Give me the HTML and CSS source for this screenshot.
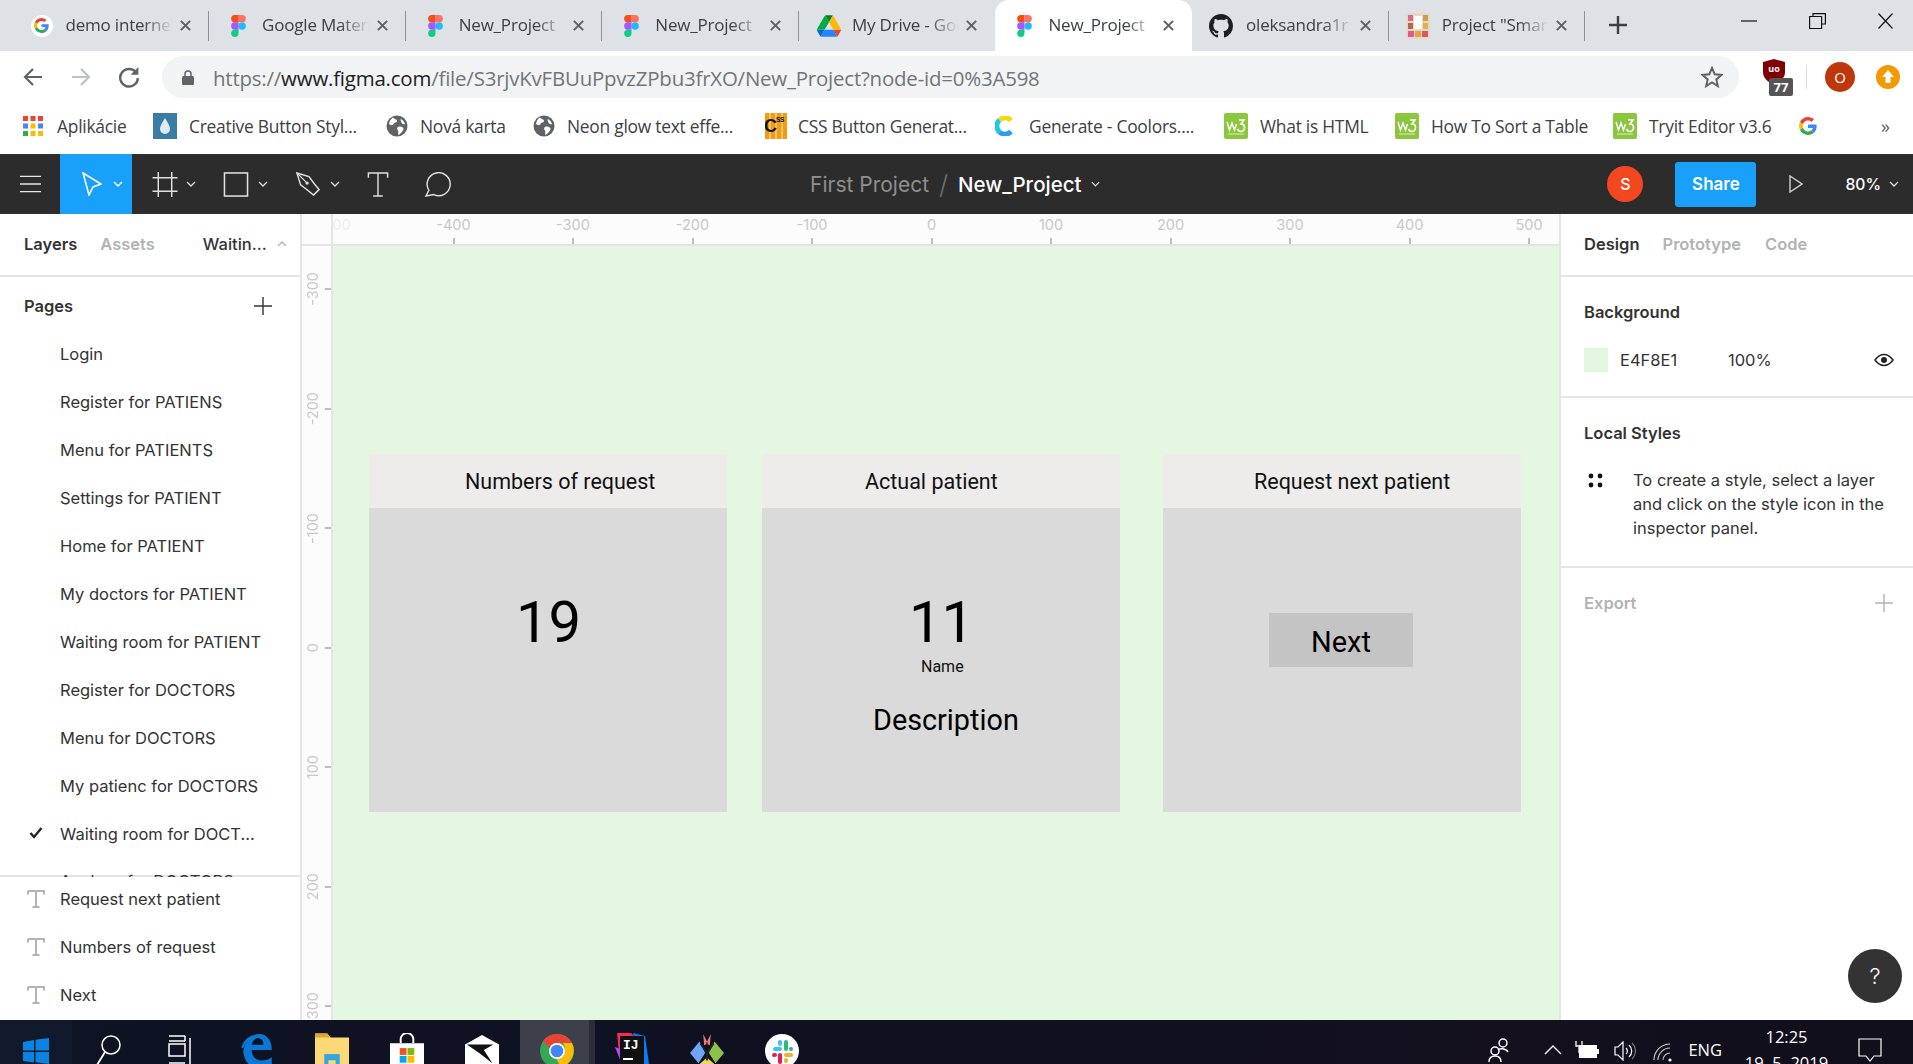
FILE: index.html
```html
<!DOCTYPE html>
<html lang="en">
<head>
<meta charset="utf-8">
<title>New_Project - Figma</title>
<link rel="stylesheet" href="styles.css">
</head>
<body>
<svg class="defs" width="0" height="0">
  <symbol id="figma" viewBox="0 0 38 57">
    <path d="M19 28.5a9.5 9.5 0 1 1 19 0 9.5 9.5 0 0 1-19 0z" fill="#1ABCFE"/>
    <path d="M0 47.5A9.5 9.5 0 0 1 9.5 38H19v9.5a9.5 9.5 0 1 1-19 0z" fill="#0ACF83"/>
    <path d="M19 0v19h9.5a9.5 9.5 0 1 0 0-19H19z" fill="#FF7262"/>
    <path d="M0 9.5A9.5 9.5 0 0 0 9.5 19H19V0H9.5A9.5 9.5 0 0 0 0 9.5z" fill="#F24E1E"/>
    <path d="M0 28.5A9.5 9.5 0 0 0 9.5 38H19V19H9.5A9.5 9.5 0 0 0 0 28.5z" fill="#A259FF"/>
  </symbol>
  <symbol id="google" viewBox="0 0 48 48">
    <path fill="#EA4335" d="M24 9.5c3.54 0 6.71 1.22 9.21 3.6l6.85-6.85C35.9 2.38 30.47 0 24 0 14.62 0 6.51 5.38 2.56 13.22l7.98 6.19C12.43 13.72 17.74 9.5 24 9.5z"/>
    <path fill="#4285F4" d="M46.98 24.55c0-1.57-.15-3.09-.38-4.55H24v9.02h12.94c-.58 2.96-2.26 5.48-4.78 7.18l7.73 6c4.51-4.18 7.09-10.36 7.09-17.65z"/>
    <path fill="#FBBC05" d="M10.53 28.59c-.48-1.45-.76-2.99-.76-4.59s.27-3.14.76-4.59l-7.98-6.19C.92 16.46 0 20.12 0 24c0 3.88.92 7.54 2.56 10.78l7.97-6.19z"/>
    <path fill="#34A853" d="M24 48c6.48 0 11.93-2.13 15.89-5.81l-7.73-6c-2.15 1.45-4.92 2.3-8.16 2.3-6.26 0-11.57-4.22-13.47-9.91l-7.98 6.19C6.51 42.62 14.62 48 24 48z"/>
  </symbol>
  <symbol id="drive" viewBox="0 0 87.3 78">
    <path d="m6.6 66.85 3.85 6.65c.8 1.4 1.95 2.5 3.3 3.3l13.75-23.8h-27.5c0 1.55.4 3.1 1.2 4.5z" fill="#0066da"/>
    <path d="m43.65 25-13.75-23.8c-1.35.8-2.5 1.9-3.3 3.3l-25.4 44a9.06 9.06 0 0 0 -1.2 4.5h27.5z" fill="#00ac47"/>
    <path d="m73.55 76.8c1.35-.8 2.5-1.9 3.3-3.3l1.6-2.75 7.65-13.25c.8-1.4 1.2-2.95 1.2-4.5h-27.502l5.852 11.5z" fill="#ea4335"/>
    <path d="m43.65 25 13.75-23.8c-1.35-.8-2.9-1.2-4.5-1.2h-18.5c-1.6 0-3.15.45-4.5 1.2z" fill="#00832d"/>
    <path d="m59.8 53h-32.3l-13.75 23.8c1.35.8 2.9 1.2 4.5 1.2h50.8c1.6 0 3.15-.45 4.5-1.2z" fill="#2684fc"/>
    <path d="m73.4 26.5-12.7-22c-.8-1.4-1.95-2.5-3.3-3.3l-13.75 23.8 16.15 28h27.45c0-1.55-.4-3.1-1.2-4.5z" fill="#ffba00"/>
  </symbol>
  <symbol id="github" viewBox="0 0 16 16">
    <path fill="#1b1f23" d="M8 0C3.58 0 0 3.58 0 8c0 3.54 2.29 6.53 5.47 7.59.4.07.55-.17.55-.38 0-.19-.01-.82-.01-1.49-2.01.37-2.53-.49-2.69-.94-.09-.23-.48-.94-.82-1.13-.28-.15-.68-.52-.01-.53.63-.01 1.08.58 1.23.82.72 1.21 1.87.87 2.33.66.07-.52.28-.87.51-1.07-1.78-.2-3.64-.89-3.64-3.95 0-.87.31-1.59.82-2.15-.08-.2-.36-1.02.08-2.12 0 0 .67-.21 2.2.82.64-.18 1.32-.27 2-.27.68 0 1.36.09 2 .27 1.53-1.04 2.2-.82 2.2-.82.44 1.1.16 1.92.08 2.12.51.56.82 1.27.82 2.15 0 3.07-1.87 3.75-3.65 3.95.29.25.54.73.54 1.48 0 1.07-.01 1.93-.01 2.2 0 .21.15.46.55.38A8.013 8.013 0 0016 8c0-4.42-3.58-8-8-8z"/>
  </symbol>
  <symbol id="close" viewBox="0 0 14 14">
    <path d="M2 2l10 10M12 2L2 12" stroke="#5f6368" stroke-width="2.2" fill="none"/>
  </symbol>
  <symbol id="globe" viewBox="0 0 22 22">
    <circle cx="11" cy="11" r="10.5" fill="#5f6368"/>
    <path d="M7 2.5c1 1.8 4 1.5 4 3.5s-3 1-3.500 3-3 1-4.500 0C3.500 6 5 3.500 7 2.500zM12 12c2-1 5 0 5.500 1.500S14 19.500 12.500 20c-1-2 .5-3-.5-4.500S10.500 13 12 12zM15 4c2 1 3.500 3 4 5-1.500.5-3 0-3.500-1.500S14 5 15 4z" fill="#fff"/>
  </symbol>
  <symbol id="w3" viewBox="0 0 24 26">
    <rect width="24" height="26" rx="2" fill="#8cc63f"/>
    <path d="M3 9l2.500 8 2.500-7 2.500 7 2-6" stroke="#fff" stroke-width="1.400" fill="none"/>
    <path d="M15 7h5l-3 4c2.500 0 3.500 1.500 3.500 3.500s-1.500 4-3.500 4-3-1-3.500-2.500" stroke="#fff" stroke-width="1.600" fill="none"/>
    <path d="M4 21h16" stroke="#d9edb8" stroke-width="1"/>
  </symbol>
  <symbol id="chev" viewBox="0 0 10 6">
    <path d="M1 1l4 4 4-4" fill="none" stroke="currentColor" stroke-width="1.300"/>
  </symbol>
  <symbol id="texticon" viewBox="0 0 18 18">
    <path d="M1 1h16v3.500M1 4.500V1M9 1v16M5.500 17h7" fill="none" stroke="#b3b3b3" stroke-width="2"/>
  </symbol>
</svg>

<div class="screen">
  <header class="tabstrip">
    <div class="tab"><span class="fav fav-g"><svg class="ico-g"><use href="#google"/></svg></span><span class="tab-title">demo internet</span><svg class="tab-x"><use href="#close"/></svg></div>
    <div class="tab"><svg class="fav fav-f"><use href="#figma"/></svg><span class="tab-title">Google Material</span><svg class="tab-x"><use href="#close"/></svg></div>
    <div class="tab"><svg class="fav fav-f"><use href="#figma"/></svg><span class="tab-title">New_Project</span><svg class="tab-x"><use href="#close"/></svg></div>
    <div class="tab"><svg class="fav fav-f"><use href="#figma"/></svg><span class="tab-title">New_Project</span><svg class="tab-x"><use href="#close"/></svg></div>
    <div class="tab tab-before"><svg class="fav fav-d"><use href="#drive"/></svg><span class="tab-title">My Drive - Google</span><svg class="tab-x"><use href="#close"/></svg></div>
    <div class="tab tab-active"><svg class="fav fav-f"><use href="#figma"/></svg><span class="tab-title">New_Project</span><svg class="tab-x"><use href="#close"/></svg></div>
    <div class="tab"><svg class="fav fav-gh"><use href="#github"/></svg><span class="tab-title">oleksandra1r</span><svg class="tab-x"><use href="#close"/></svg></div>
    <div class="tab"><svg class="fav fav-p" viewBox="0 0 24 26"><rect width="24" height="26" rx="2" fill="#e6d9c8"/><rect x="2" y="2" width="5" height="6" fill="#d86a8c"/><rect x="17" y="2" width="5" height="6" fill="#c9a24a"/><rect x="8" y="3" width="8" height="13" fill="#fff"/><rect x="2" y="10" width="5" height="6" fill="#b06a4a"/><rect x="17" y="10" width="5" height="6" fill="#e3b04b"/><rect x="2" y="18" width="6" height="6" fill="#e05a8a"/><rect x="9" y="18" width="6" height="6" fill="#e9a13b"/><rect x="16" y="18" width="6" height="6" fill="#d65a5a"/></svg><span class="tab-title">Project "Smart</span><svg class="tab-x"><use href="#close"/></svg></div>
    <svg class="newtab" viewBox="0 0 18 18"><path d="M9 0v18M0 9h18" stroke="#3c4043" stroke-width="2.400"/></svg>
    <div class="winctl">
      <svg class="win-min" viewBox="0 0 16 2"><path d="M0 1h16" stroke="#111" stroke-width="1.200"/></svg>
      <svg class="win-res" viewBox="0 0 17 16"><path d="M4 3V.6h12.400V11H13M.6 3.500h12v12H.6z" fill="none" stroke="#111" stroke-width="1.200"/></svg>
      <svg class="win-x" viewBox="0 0 15 16"><path d="M.5.500l14 15M14.500.500l-14 15" stroke="#111" stroke-width="1.200"/></svg>
    </div>
  </header>

  <div class="addressbar">
    <svg class="nav-back" viewBox="0 0 20 20"><path d="M19 10H2M10 2l-8 8 8 8" fill="none" stroke="#5f6368" stroke-width="2.200"/></svg>
    <svg class="nav-fwd" viewBox="0 0 20 20"><path d="M1 10h17M10 2l8 8-8 8" fill="none" stroke="#bdc1c6" stroke-width="2.200"/></svg>
    <svg class="nav-reload" viewBox="0 0 20 20"><path d="M16.500 6A8 8 0 1 0 18 11" fill="none" stroke="#5f6368" stroke-width="2.200"/><path d="M18.500 1v7h-7z" fill="#5f6368"/></svg>
    <div class="omnibox">
      <svg class="lock" viewBox="0 0 12 15"><path d="M3 6V4a3 3 0 0 1 6 0v2" fill="none" stroke="#5f6368" stroke-width="1.500"/><rect y="6" width="12" height="9" rx="1.500" fill="#5f6368"/></svg>
      <span class="url"><span class="url-s">https://</span><span class="url-d">www.figma.com</span><span class="url-s">/file/S3rjvKvFBUuPpvzZPbu3frXO/New_Project?node-id=0%3A598</span></span>
      <svg class="star" viewBox="0 0 22 22"><path d="M11 2l2.700 6.300 6.800.6-5.200 4.500 1.600 6.700L11 16.500 5.100 20.100l1.600-6.700L1.500 8.900l6.800-.6z" fill="none" stroke="#5f6368" stroke-width="2"/></svg>
    </div>
    <div class="ublock">
      <svg class="ub-shield" viewBox="0 0 22 26"><path d="M11 0l11 3v10c0 6-5 10-11 13C5 23 0 19 0 13V3z" fill="#800000"/><text x="11" y="13" class="ub-text">uo</text></svg>
      <span class="ub-badge">77</span>
    </div>
    <span class="ext-sep"></span>
    <span class="avatar-o">O</span>
    <svg class="update" viewBox="0 0 24 24"><circle cx="12" cy="12" r="12" fill="#f29900"/><path d="M12 5l6 7h-3.500v6h-5v-6H6z" fill="#fff"/></svg>
  </div>

  <nav class="bookmarks">
    <div class="bm bm-1"><svg class="bm-apps" viewBox="0 0 20 20"><rect width="5" height="5" fill="#ea4335"/><rect x="7.500" width="5" height="5" fill="#ea4335"/><rect x="15" width="5" height="5" fill="#ea4335"/><rect y="7.500" width="5" height="5" fill="#4285f4"/><rect x="7.500" y="7.500" width="5" height="5" fill="#fbbc05"/><rect x="15" y="7.500" width="5" height="5" fill="#4285f4"/><rect y="15" width="5" height="5" fill="#34a853"/><rect x="7.500" y="15" width="5" height="5" fill="#fbbc05"/><rect x="15" y="15" width="5" height="5" fill="#fbbc05"/></svg><span>Aplikácie</span></div>
    <div class="bm bm-2"><svg class="bm-ic" viewBox="0 0 24 26"><rect width="24" height="26" fill="#3a7ca5"/><path d="M12 5c3 5 5 8 5 11a5 5 0 0 1-10 0c0-3 2-6 5-11z" fill="#dcecf5"/></svg><span>Creative Button Styl...</span></div>
    <div class="bm bm-3"><svg class="bm-ic"><use href="#globe"/></svg><span>Nová karta</span></div>
    <div class="bm bm-4"><svg class="bm-ic"><use href="#globe"/></svg><span>Neon glow text effe...</span></div>
    <div class="bm bm-5"><svg class="bm-ic" viewBox="0 0 22 26"><rect width="22" height="26" fill="#f39c12"/><path d="M5 0v26M11 0v26M17 0v26" stroke="#fff" stroke-width=".8"/><text x="-1" y="19" class="css-c">C</text><text x="11" y="9" class="css-text">SS</text></svg><span>CSS Button Generat...</span></div>
    <div class="bm bm-6"><svg class="bm-ic" viewBox="0 0 20 20"><path d="M16 4.500A8 8 0 0 0 4.500 4" stroke="#f5d90a" stroke-width="5" fill="none"/><path d="M4.500 4a8 8 0 0 0 0 12" stroke="#1ec8e7" stroke-width="5" fill="none"/><path d="M4.500 16A8 8 0 0 0 16 15.500" stroke="#2a9df4" stroke-width="5" fill="none"/></svg><span>Generate - Coolors....</span></div>
    <div class="bm bm-7"><svg class="bm-ic"><use href="#w3"/></svg><span>What is HTML</span></div>
    <div class="bm bm-8"><svg class="bm-ic"><use href="#w3"/></svg><span>How To Sort a Table</span></div>
    <div class="bm bm-9"><svg class="bm-ic"><use href="#w3"/></svg><span>Tryit Editor v3.6</span></div>
    <svg class="bm-g"><use href="#google"/></svg>
    <span class="bm-more">»</span>
  </nav>

  <div class="figbar">
    <div class="tools">
      <div class="tool-menu"><svg class="ic-menu" viewBox="0 0 22 18"><path d="M0 1h22M0 9h22M0 17h22" stroke="#e8e8e8" stroke-width="1.500"/></svg></div>
      <div class="tool tool-active"><svg class="ic-move" viewBox="0 0 20 24"><path d="M1 1l18 11-8 3-4 8z" fill="none" stroke="#fff" stroke-width="1.600"/></svg><svg class="chev-s"><use href="#chev"/></svg></div>
      <div class="tool"><svg class="ic-tool" viewBox="0 0 26 26"><path d="M6 0v26M20 0v26M0 6h26M0 20h26" stroke="#e0e0e0" stroke-width="1.500"/></svg><svg class="chev-s"><use href="#chev"/></svg></div>
      <div class="tool tool-rect"><svg class="ic-tool" viewBox="0 0 26 26"><rect x="1" y="1" width="24" height="24" fill="none" stroke="#e0e0e0" stroke-width="1.600"/></svg><svg class="chev-s"><use href="#chev"/></svg></div>
      <div class="tool"><svg class="ic-pen" viewBox="0 0 26 26"><path d="M1 1l13 4 6 8 5 6-6 6-6-5-8-6z" fill="none" stroke="#e0e0e0" stroke-width="1.600"/><path d="M1 1l11 11" stroke="#e0e0e0" stroke-width="1.300"/><circle cx="12" cy="12" r="1.800" fill="#e0e0e0"/></svg><svg class="chev-s"><use href="#chev"/></svg></div>
      <div class="tool-plain"><svg class="ic-t" viewBox="0 0 22 26"><path d="M1 6V1h20v5M11 1v24M6 25h10" fill="none" stroke="#e0e0e0" stroke-width="1.500"/></svg></div>
      <div class="tool-plain tool-comment"><svg class="ic-c" viewBox="0 0 28 26"><path d="M2 25l3-6a12 12 0 1 1 5 4.500z" fill="none" stroke="#e0e0e0" stroke-width="1.500"/></svg></div>
    </div>
    <div class="crumbs"><span class="crumb-team">First Project</span><span class="crumb-slash">/</span><span class="crumb-file">New_Project</span><svg class="chev-c"><use href="#chev"/></svg></div>
    <div class="fig-right">
      <span class="avatar-s">S</span>
      <span class="share">Share</span>
      <svg class="play" viewBox="0 0 14 18"><path d="M1 1l12 8-12 8z" fill="none" stroke="#cfcfcf" stroke-width="1.400"/></svg>
      <span class="zoomv">80%</span>
      <svg class="chev-z"><use href="#chev"/></svg>
    </div>
  </div>

  <main class="work">
    <aside class="left">
      <div class="left-tabs"><span class="tab-on">Layers</span><span class="tab-off tab-assets">Assets</span><span class="page-pick">Waitin...</span><svg class="caret" viewBox="0 0 10 6"><path d="M1 5l4-4 4 4" fill="none" stroke="#b3b3b3" stroke-width="1.300"/></svg></div>
      <div class="pages-head"><span>Pages</span><svg class="plus" viewBox="0 0 18 18"><path d="M9 0v18M0 9h18" stroke="#333" stroke-width="1.400"/></svg></div>
      <ul class="pages">
        <li>Login</li>
        <li>Register for PATIENS</li>
        <li>Menu for PATIENTS</li>
        <li>Settings for PATIENT</li>
        <li>Home for PATIENT</li>
        <li>My doctors for PATIENT</li>
        <li>Waiting room for PATIENT</li>
        <li>Register for DOCTORS</li>
        <li>Menu for DOCTORS</li>
        <li>My patienc for DOCTORS</li>
        <li class="page-on"><svg class="check" viewBox="0 0 14 12"><path d="M1.500 6l3.500 4 7.500-9" fill="none" stroke="#222" stroke-width="2.400"/></svg>Waiting room for DOCT...</li>
        <li class="page-clip">Analyze for DOCTORS</li>
      </ul>
      <ul class="layers">
        <li><svg class="t-ic"><use href="#texticon"/></svg>Request next patient</li>
        <li><svg class="t-ic"><use href="#texticon"/></svg>Numbers of request</li>
        <li><svg class="t-ic"><use href="#texticon"/></svg>Next</li>
      </ul>
    </aside>

    <section class="center">
      <div class="rule-top">
        <div class="corner"></div>
        <div class="hticks">
          <div class="ht ht-first"><span>-500</span></div>
          <div class="ht"><span>-400</span><i></i></div>
          <div class="ht"><span>-300</span><i></i></div>
          <div class="ht"><span>-200</span><i></i></div>
          <div class="ht"><span>-100</span><i></i></div>
          <div class="ht"><span>0</span><i></i></div>
          <div class="ht"><span>100</span><i></i></div>
          <div class="ht"><span>200</span><i></i></div>
          <div class="ht"><span>300</span><i></i></div>
          <div class="ht"><span>400</span><i></i></div>
          <div class="ht"><span>500</span><i></i></div>
        </div>
      </div>
      <div class="stage">
        <div class="vticks">
          <div class="vt vt-first"><span>-300</span><i></i></div>
          <div class="vt"><span>-200</span><i></i></div>
          <div class="vt"><span>-100</span><i></i></div>
          <div class="vt"><span>0</span><i></i></div>
          <div class="vt"><span>100</span><i></i></div>
          <div class="vt"><span>200</span><i></i></div>
          <div class="vt"><span>300</span><i></i></div>
        </div>
        <div class="canvas">
          <article class="card card-a">
            <div class="card-head"><span class="ttl ttl-a">Numbers of request</span></div>
            <div class="big big-a">19</div>
          </article>
          <article class="card card-b">
            <div class="card-head"><span class="ttl ttl-b">Actual patient</span></div>
            <div class="big big-b">11</div>
            <div class="name">Name</div>
            <div class="desc">Description</div>
          </article>
          <article class="card card-c">
            <div class="card-head"><span class="ttl ttl-c">Request next patient</span></div>
            <div class="next">Next</div>
          </article>
        </div>
      </div>
    </section>

    <aside class="right">
      <div class="right-tabs"><span class="tab-on">Design</span><span class="tab-off tab-proto">Prototype</span><span class="tab-off tab-code">Code</span></div>
      <section class="sec sec-bg">
        <h3 class="sec-h">Background</h3>
        <div class="bg-row"><span class="swatch"></span><span class="hex">E4F8E1</span><span class="pct">100%</span><svg class="eye" viewBox="0 0 20 14"><path d="M1 7c2.500-3.500 5.500-5.500 9-5.500S16.500 3.500 19 7c-2.500 3.500-5.500 5.500-9 5.500S3.500 10.500 1 7z" fill="none" stroke="#222" stroke-width="1.500"/><circle cx="10" cy="7" r="3" fill="#222"/></svg></div>
      </section>
      <section class="sec sec-ls">
        <h3 class="sec-h">Local Styles</h3>
        <div class="ls-row"><svg class="dots" viewBox="0 0 15 15"><circle cx="3" cy="3" r="2.400" fill="#111"/><circle cx="12" cy="3" r="2.400" fill="#111"/><circle cx="3" cy="12" r="2.400" fill="#111"/><circle cx="12" cy="12" r="2.400" fill="#111"/></svg><p>To create a style, select a layer and click on the style icon in the inspector panel.</p></div>
      </section>
      <section class="sec-ex"><h3 class="sec-h sec-dim">Export</h3><svg class="plus-dim" viewBox="0 0 18 18"><path d="M9 0v18M0 9h18" stroke="#b3b3b3" stroke-width="1.400"/></svg></section>
      <div class="help">?</div>
    </aside>
  </main>

  <footer class="taskbar">
    <div class="tb-start"><svg class="ti-win" viewBox="0 0 26 26"><path d="M0 4l11-2v10.500H0zM12.500 1.800L26 0v12.500H12.500zM0 14h11v10.500L0 23zM12.500 14H26v12l-13.500-1.800z" fill="#0a84e0"/></svg></div>
    <div class="tb-cell"><svg class="ti-search" viewBox="0 0 25 32"><circle cx="15" cy="10" r="9" fill="none" stroke="#fff" stroke-width="1.500"/><path d="M9 17L1 30" stroke="#fff" stroke-width="1.800"/></svg></div>
    <div class="tb-cell"><svg class="ti-view" viewBox="0 0 24 32"><path d="M1 1h16M1 28h16M1 6h16M17 1v5" fill="none" stroke="#fff" stroke-width="1.500"/><rect x="1" y="9" width="16" height="12" fill="none" stroke="#fff" stroke-width="1.500"/><path d="M22 3v26" stroke="#fff" stroke-width="1.500"/></svg></div>
    <div class="tb-gap"></div>
    <div class="tb-app"><svg class="ti-app" viewBox="0 0 30 34"><path d="M2 18C3 7 10 1 17 1c8 0 12 7 12 15H10c0 6 4 10 9 10 4 0 7-1 10-3v8c-4 2-7 3-11 3C9 34 3 27 2 18z" fill="#0a78d7"/><path d="M1 14C4 6 9 3 14 3" stroke="#0a78d7" stroke-width="2" fill="none"/><path d="M10 11h11c0-4-2-6-5-6s-5 2-6 6z" fill="#101222"/></svg></div>
    <div class="tb-app"><svg class="ti-app" viewBox="0 0 33 34"><path d="M0 0h12l3 4h18v30H0z" fill="#fbd977"/><path d="M0 0h12l3 4H0z" fill="#e2a82d"/><rect x="9" y="20" width="15" height="14" fill="#33a6e0"/><rect x="13" y="26" width="7" height="8" fill="#fbd977"/></svg></div>
    <div class="tb-app"><svg class="ti-app" viewBox="0 0 35 36"><path d="M11 10V6a6.500 6.500 0 0 1 13 0v4" fill="none" stroke="#fff" stroke-width="2"/><rect y="10" width="35" height="26" fill="#fff"/><rect x="10" y="15" width="7" height="7" fill="#f25022"/><rect x="18" y="15" width="7" height="7" fill="#7fba00"/><rect x="10" y="23" width="7" height="7" fill="#00a4ef"/><rect x="18" y="23" width="7" height="7" fill="#ffb900"/></svg></div>
    <div class="tb-app"><svg class="ti-app" viewBox="0 0 36 34"><path d="M0 10L18 0l18 10v24H0z" fill="#fff"/><path d="M2 10h28L20 16l9 14-14-11z" fill="#111"/></svg></div>
    <div class="tb-app tb-chrome"><svg class="ti-app" viewBox="0 0 34 34"><circle cx="17" cy="17" r="17" fill="#34a853"/><path d="M17 0a17 17 0 0 1 15 9H17a8 8 0 0 0-7.500 5L3 7A17 17 0 0 1 17 0z" fill="#ea4335"/><path d="M32 9a17 17 0 0 1-11 24l-7-12a8 8 0 0 0 10-4 8 8 0 0 0-1-8z" fill="#fbbc05"/><circle cx="17" cy="17" r="8" fill="#fff"/><circle cx="17" cy="17" r="6.300" fill="#4285f4"/></svg></div>
    <div class="tb-app"><svg class="ti-app" viewBox="0 0 34 36"><path d="M2 0l14 0 6 6-18 14z" fill="#fe2857"/><path d="M18 0l12 3 4 28-10 5z" fill="#087cfa"/><path d="M0 14l8 20 14 2-6-16z" fill="#b74af7"/><rect x="5" y="3" width="24" height="30" fill="#111"/><text x="8" y="16" class="ij-text">IJ</text><rect x="8" y="25" width="10" height="2" fill="#fff"/></svg></div>
    <div class="tb-app"><svg class="ti-app" viewBox="0 0 36 36"><path d="M10 8L0 20l9 11 7-11z" fill="#6ea6f7"/><path d="M26 8l10 12-9 11-7-11z" fill="#8bc34a"/><path d="M18 25l8 7-8 6-8-6z" fill="#f4d35e"/><path d="M14 0l5 10-4 2zM22 0l-5 10 4 2z" fill="#f27a7a"/><path d="M11 10l7 10 7-10M18 20v8" stroke="#222" stroke-width="2" fill="none"/></svg></div>
    <div class="tb-app"><svg class="ti-app" viewBox="0 0 34 34"><circle cx="17" cy="17" r="17" fill="#fff"/><rect x="8" y="13" width="9" height="4" rx="2" fill="#36c5f0"/><rect x="13" y="6" width="4" height="6" rx="2" fill="#36c5f0"/><rect x="19" y="6" width="4" height="11" rx="2" fill="#2eb67d"/><rect x="24" y="13" width="4" height="4" rx="2" fill="#2eb67d"/><rect x="19" y="19" width="9" height="4" rx="2" fill="#ecb22e"/><rect x="19" y="24" width="4" height="5" rx="2" fill="#ecb22e"/><rect x="13" y="19" width="4" height="11" rx="2" fill="#e01e5a"/><rect x="7" y="19" width="5" height="4" rx="2" fill="#e01e5a"/></svg></div>
    <div class="tray">
      <svg class="tr-people" viewBox="0 0 22 24"><circle cx="15" cy="5" r="4" fill="none" stroke="#fff" stroke-width="1.500"/><path d="M10 12c1-2 8-2 10 2" fill="none" stroke="#fff" stroke-width="1.500"/><circle cx="7" cy="13" r="4" fill="none" stroke="#fff" stroke-width="1.500"/><path d="M1 24c0-4 2-6 6-6s6 2 6 6" fill="none" stroke="#fff" stroke-width="1.500"/></svg>
      <svg class="tr-caret" viewBox="0 0 18 10"><path d="M1 9l8-8 8 8" fill="none" stroke="#fff" stroke-width="1.300"/></svg>
      <svg class="tr-batt" viewBox="0 0 24 18"><rect x="4" y="4" width="18" height="13" fill="#fff"/><rect x="22" y="8" width="2" height="5" fill="#fff"/><path d="M1 0v5h6V0M4 6v6" fill="none" stroke="#fff" stroke-width="1.300"/></svg>
      <svg class="tr-vol" viewBox="0 0 22 20"><path d="M1 6h3l5-5v18l-5-5H1z" fill="none" stroke="#fff" stroke-width="1.200"/><path d="M12 7a4 4 0 0 1 0 6M15 4a8 8 0 0 1 0 12" fill="none" stroke="#fff" stroke-width="1.200"/><path d="M18 2a11 11 0 0 1 0 16" fill="none" stroke="#777" stroke-width="1.200"/></svg>
      <svg class="tr-wifi" viewBox="0 0 20 20"><circle cx="17" cy="18" r="1.600" fill="#fff"/><path d="M10 18a7 7 0 0 1 7-7M5 18a12 12 0 0 1 12-12M1 18A16 16 0 0 1 17 2" fill="none" stroke="#ccc" stroke-width="1.100"/></svg>
      <span class="tr-lang">ENG</span>
      <div class="clock"><span>12:25</span><span>19. 5. 2019</span></div>
      <svg class="tr-note" viewBox="0 0 24 24"><path d="M1 1h22v17h-7l-4 5-4-5H1z" fill="none" stroke="#fff" stroke-width="1.200"/></svg>
    </div>
  </footer>
</div>
</body>
</html>
```
FILE: styles.css
```css
* { box-sizing: border-box; }
html, body { margin: 0; padding: 0; height: 100%; overflow: hidden; background: #fff; }
body { font-family: "Open Sans", "Noto Sans", sans-serif; color: #333; }
.defs { display: block; height: 0; }
.screen { width: 1913px; height: 1064px; display: flex; flex-direction: column; overflow: hidden; }
svg { display: block; flex: none; }

/* tab strip */
.tabstrip { height: 51px; flex: none; background: #dee1e6; display: flex; align-items: stretch; padding-left: 12.5px; }
.tab { width: 196.6px; flex: none; display: flex; align-items: center; padding: 0 17px 0 18px; position: relative; }
.tab::after { content: ""; position: absolute; right: 0; top: 11px; height: 30px; width: 1px; background: #8f9296; }
.tab-before::after, .tab-active::after { display: none; }
.tab-active { background: #fff; border-radius: 14px 14px 0 0; }
.fav { width: 22px; height: 22px; }
.fav-g { background: #fff; border-radius: 50%; display: flex; align-items: center; justify-content: center; }
.ico-g { width: 15px; height: 15px; }
.fav-f { width: 15px; height: 22px; margin: 0 3px 0 4px; }
.fav-d { width: 24px; height: 22px; margin-right: -2px; }
.fav-gh { width: 24px; height: 24px; margin-left: -1px; }
.fav-p { width: 24px; height: 26px; margin-left: -1px; margin-right: -1px; }
.tab-title { flex: 1; min-width: 0; margin: -2px 0 0 13px; font-size: 17px; letter-spacing: -.2px; white-space: nowrap; overflow: hidden; color: #3c4043;
  -webkit-mask-image: linear-gradient(90deg, #000 72%, transparent 100%); mask-image: linear-gradient(90deg, #000 72%, transparent 100%); }
.tab-x { width: 13px; height: 13px; margin-left: 6px; }
.newtab { width: 18px; height: 18px; margin: 16px 0 0 24px; }
.winctl { margin-left: auto; display: flex; align-items: flex-start; }
.win-min { width: 16px; height: 2px; margin-top: 20px; margin-right: 52px; }
.win-res { width: 17px; height: 16px; margin-top: 13px; margin-right: 52px; }
.win-x { width: 15px; height: 16px; margin-top: 13px; margin-right: 20px; }

/* address bar */
.addressbar { height: 52px; flex: none; display: flex; align-items: center; background: #fff; padding-left: 23px; }
.nav-back { width: 20px; height: 20px; }
.nav-fwd { width: 22px; height: 20px; margin-left: 27px; }
.nav-reload { width: 22px; height: 22px; margin-left: 26px; }
.omnibox { margin-left: 22px; width: 1577px; height: 42px; border-radius: 21px; background: #f1f3f4; display: flex; align-items: center; padding-left: 20px; position: relative; }
.lock { width: 12px; height: 15px; }
.url { margin: 1px 0 0 19px; font-size: 20.45px; letter-spacing: -.2px; white-space: nowrap; }
.url-s { color: #70757a; }
.url-d { color: #202124; }
.star { width: 22px; height: 22px; position: absolute; right: 16px; top: 10px; }
.ublock { width: 32px; height: 36px; margin-left: 23px; position: relative; }
.ub-shield { width: 22px; height: 26px; margin-left: 1px; }
.ub-text { font: 700 9px "Open Sans", sans-serif; fill: #fff; text-anchor: middle; }
.ub-badge { position: absolute; left: 7px; top: 19px; width: 24px; height: 18px; background: #555; color: #fff; font: 700 13px/18px "Open Sans", sans-serif; text-align: center; border-radius: 2px; }
.ext-sep { width: 1px; height: 24px; background: #dadce0; margin-left: 12px; }
.avatar-o { width: 30px; height: 30px; border-radius: 50%; background: #bf360c; color: #fff; font-size: 15px; text-align: center; line-height: 30px; margin-left: 18px; }
.update { width: 24px; height: 24px; margin-left: 21px; }

/* bookmarks */
.bookmarks { height: 51px; flex: none; display: flex; align-items: center; padding-bottom: 5px; font-size: 17.4px; letter-spacing: -.25px; color: #3c4043; }
.bm { display: flex; align-items: center; flex: none; white-space: nowrap; }
.bm-ic { width: 22px; height: 26px; margin-right: 12px; }
.bm-apps { width: 20px; height: 20px; margin-right: 14px; }
.bm-1 { margin-left: 23px; width: 130px; }
.bm-2 { width: 233px; }
.bm-2 .bm-ic { width: 24px; margin-right: 12px; }
.bm-3 { width: 147px; }
.bm-4 { width: 232px; }
.bm-5 { width: 230px; }
.bm-5 .bm-ic { margin-right: 11px; }
.bm-6 { width: 229px; }
.bm-7 { width: 171px; }
.bm-8 { width: 218px; }
.bm-9 { width: 186px; }
.bm-3 .bm-ic, .bm-4 .bm-ic { width: 22px; height: 22px; }
.bm-6 .bm-ic { width: 20px; height: 20px; margin-right: 14px; }
.bm-7 .bm-ic, .bm-8 .bm-ic, .bm-9 .bm-ic { width: 24px; height: 26px; }
.css-c { font: 700 18px "Liberation Sans", sans-serif; fill: #111; }
.css-text { font: 700 6.5px "Liberation Sans", sans-serif; fill: #111; }
.bm-g { width: 18px; height: 18px; }
.bm-more { margin-left: 64px; font-size: 18px; color: #5f6368; }

/* figma bar */
.figbar { height: 60px; flex: none; background: #2c2c2c; display: flex; align-items: center; }
.tools { display: flex; align-items: stretch; height: 60px; flex: 0 0 468px; }
.tool-menu { width: 60px; display: flex; align-items: center; padding-left: 20px; }
.ic-menu { width: 21px; height: 18px; }
.tool { width: 72px; display: flex; align-items: center; padding-left: 20px; color: #ddd; }
.tool-active { background: #18a0fb; padding-left: 22px; color: #fff; }
.tool-rect { padding-left: 19px; }
.tool-rect .chev-s { margin-left: 9px; }
.ic-move { width: 20px; height: 24px; margin-right: 11px; }
.ic-tool { width: 26px; height: 25px; }
.ic-pen { width: 24px; height: 24px; margin-right: 2px; }
.ic-t { width: 22px; height: 25px; }
.ic-c { width: 27px; height: 25px; }
.chev-s { width: 10px; height: 6px; margin-left: 8px; }
.tool-active .chev-s { margin-left: 0; }
.tool-plain { width: 60px; display: flex; align-items: center; justify-content: center; }
.tool-comment { padding-right: 2px; }
.crumbs { margin-left: 342px; display: flex; align-items: center; font-family: Inter, sans-serif; font-size: 21px; white-space: nowrap; }
.crumb-team { color: #8f8f8f; }
.crumb-slash { color: #6f6f6f; margin: 0 10px; font-size: 26px; font-weight: 300; }
.crumb-file { color: #fff; font-weight: 500; font-size: 20.5px; }
.chev-c { width: 9px; height: 6px; margin-left: 9px; color: #ddd; }
.fig-right { margin-left: auto; display: flex; align-items: center; padding-right: 14px; font-family: Inter, sans-serif; }
.avatar-s { width: 36px; height: 36px; border-radius: 50%; background: #f24822; color: #fff; font-size: 16px; font-weight: 500; text-align: center; line-height: 36px; }
.share { width: 81px; height: 45px; margin-left: 32px; border-radius: 3px; background: #18a0fb; color: #fff; font-size: 17px; font-weight: 600; text-align: center; line-height: 45px; }
.play { width: 14px; height: 18px; margin-left: 33px; }
.zoomv { margin-left: 42px; color: #fff; font-size: 15.7px; font-weight: 500; }
.chev-z { width: 10px; height: 6px; margin-left: 8px; color: #ddd; }

/* workspace */
.work { height: 806px; flex: none; display: flex; font-family: Inter, sans-serif; }
.left { width: 302px; flex: none; border-right: 2px solid #e5e5e5; display: flex; flex-direction: column; background: #fff; font-size: 16.5px; color: #333; }
.left-tabs { height: 63px; flex: none; border-bottom: 2px solid #e5e5e5; display: flex; align-items: center; padding: 0 0 2px 24px; }
.tab-on { color: #333; font-weight: 600; font-size: 16.5px; }
.tab-off { color: #b3b3b3; font-weight: 600; font-size: 16.5px; }
.tab-assets { margin-left: 23px; }
.page-pick { margin-left: 48px; font-weight: 500; }
.caret { width: 10px; height: 6px; margin-left: 10px; }
.pages-head { height: 53px; flex: none; display: flex; align-items: center; justify-content: space-between; padding: 5px 28px 0 24px; font-weight: 600; }
.plus { width: 18px; height: 18px; }
.pages { list-style: none; margin: 0; padding: 0; height: 547px; flex: none; overflow: hidden; background: linear-gradient(#e5e5e5, #e5e5e5) left bottom / 100% 2px no-repeat; }
.pages li { height: 48px; line-height: 48px; padding-left: 60px; position: relative; white-space: nowrap; }
.pages .page-clip { top: -1px; }
.check { width: 14px; height: 12px; position: absolute; left: 29px; top: 17px; }
.layers { list-style: none; margin: -2px 0 0; padding: 0; flex: 1; overflow: hidden; }
.layers li { height: 48px; display: flex; align-items: center; padding-left: 27px; }
.t-ic { width: 18px; height: 18px; margin-right: 15px; }

.center { flex: 1; min-width: 0; display: flex; flex-direction: column; }
.rule-top { height: 32px; flex: none; display: flex; background: #fcfcfc; border-bottom: 2px solid #e5e5e5; }
.corner { width: 31px; flex: none; border-right: 2px solid #e5e5e5; }
.hticks { flex: 1; min-width: 0; display: flex; overflow: hidden; }
.ht { width: 119.5px; flex: none; position: relative; text-align: center; font-size: 14.5px; color: #c8c8c8; line-height: 22px; }
.ht-first { margin-left: -58.75px; opacity: .3; }
.ht span { display: block; }
.ht i { position: absolute; left: 50%; top: 24px; width: 2px; height: 6px; margin-left: -1px; background: #bdbdbd; }
.stage { flex: 1; min-height: 0; display: flex; }
.vticks { width: 31px; flex: none; border-right: 2px solid #e5e5e5; background: #fcfcfc; overflow: hidden; }
.vt { height: 119.5px; position: relative; display: flex; align-items: center; font-size: 14.5px; color: #c8c8c8; }
.vt-first { margin-top: -16.75px; }
.vt span { writing-mode: vertical-rl; transform: rotate(180deg); width: 22px; line-height: 22px; text-align: center; }
.vt i { position: absolute; right: 0; top: 50%; width: 6px; height: 2px; margin-top: -1px; background: #bdbdbd; }
.canvas { flex: 1; min-width: 0; position: relative; background: #e4f8e1; overflow: hidden; font-family: Roboto, sans-serif; color: #000; }
.card { position: absolute; top: 208px; height: 358px; background: #dadada; }
.card-a { left: 36px; width: 358px; }
.card-b { left: 429px; width: 358px; }
.card-c { left: 830px; width: 358px; }
.card-head { height: 54px; background: #eeebeb; position: relative; }
.ttl { position: absolute; top: 13.500px; line-height: 28px; font-size: 21.5px; white-space: nowrap; color: #111; }
.ttl-a { left: 96px; }
.ttl-b { left: 103px; }
.ttl-c { left: 91px; }
.big { position: absolute; top: 134px; font-size: 58px; line-height: 68px; }
.big-a { left: 147px; }
.big-b { left: 147px; }
.name { position: absolute; top: 202px; left: 159px; font-size: 16px; line-height: 22px; color: #111; }
.desc { position: absolute; top: 248px; left: 111px; font-size: 28.8px; line-height: 36px; }
.next { position: absolute; left: 106px; top: 159px; width: 144px; height: 54px; background: #c4c4c4; font-size: 29px; line-height: 59px; text-align: center; }

.right { width: 354px; flex: none; border-left: 2px solid #e5e5e5; background: #fff; position: relative; font-size: 16.5px; color: #333; }
.right-tabs { height: 63px; border-bottom: 2px solid #e5e5e5; display: flex; align-items: center; padding: 0 0 2px 23px; }
.tab-proto { margin-left: 23px; }
.tab-code { margin-left: 24px; }
.sec { border-bottom: 2px solid #e5e5e5; padding: 0 0 0 23px; }
.sec-bg { height: 121px; padding-top: 24px; }
.sec-h { margin: 0; font-size: 16.5px; font-weight: 600; line-height: 22px; }
.bg-row { display: flex; align-items: center; margin-top: 25px; }
.swatch { width: 24px; height: 24px; background: #e4f8e1; }
.hex { margin-left: 12px; width: 108px; font-size: 16.5px; }
.pct { width: 142px; font-size: 16.5px; }
.eye { width: 20px; height: 14px; margin-left: 4px; }
.sec-ls { height: 170px; padding-top: 24px; }
.ls-row { display: flex; margin-top: 27px; }
.dots { width: 15px; height: 15px; margin: 2px 0 0 4px; }
.ls-row p { margin: -3px 0 0 30px; width: 272px; font-size: 16.5px; line-height: 24px; }
.sec-ex { display: flex; align-items: center; justify-content: space-between; padding: 24px 20px 0 23px; }
.sec-dim { color: #b3b3b3; }
.plus-dim { width: 18px; height: 18px; }
.help { position: absolute; left: 287px; top: 735px; width: 54px; height: 54px; border-radius: 50%; background: #333; color: #fff; font-size: 22px; font-weight: 300; text-align: center; line-height: 54px; }

/* taskbar */
.taskbar { height: 44px; flex: none; overflow: hidden; display: flex; align-items: flex-start; background: linear-gradient(90deg, #0e1424 0%, #0f1020 50%, #14101e 80%, #100f1a 100%); color: #fff; }
.tb-start { width: 72px; height: 44px; flex: none; background: #101a2c; padding: 18px 0 0 23px; }
.ti-win { width: 26px; height: 26px; }
.tb-cell { width: 72px; height: 44px; flex: none; display: flex; justify-content: center; padding-top: 15px; }
.ti-search { width: 25px; height: 32px; }
.ti-view { width: 24px; height: 32px; }
.tb-gap { width: 3.5px; flex: none; }
.tb-app { width: 75px; height: 44px; flex: none; display: flex; justify-content: center; padding-top: 13px; }
.tb-chrome { background: #3d3f4b; box-shadow: inset -6px 0 #2b2c37; }
.ti-app { width: 34px; height: 36px; }
.ij-text { font: 700 13px "Liberation Mono", monospace; fill: #fff; }
.tray { margin-left: auto; display: flex; align-items: flex-start; height: 44px; font-size: 16.5px; }
.tr-people { width: 22px; height: 24px; margin-top: 18px; }
.tr-caret { width: 18px; height: 10px; margin: 25px 0 0 34px; }
.tr-batt { width: 24px; height: 18px; margin: 21px 0 0 13px; }
.tr-vol { width: 22px; height: 20px; margin: 21px 0 0 15px; }
.tr-wifi { width: 20px; height: 20px; margin: 22px 0 0 17px; }
.tr-lang { margin: 18px 0 0 15px; line-height: 24px; }
.clock { width: 87px; margin: 4px 0 0 21px; display: flex; flex-direction: column; align-items: center; line-height: 26px; white-space: nowrap; }
.tr-note { width: 24px; height: 24px; margin: 18px 31px 0 28px; }
```
